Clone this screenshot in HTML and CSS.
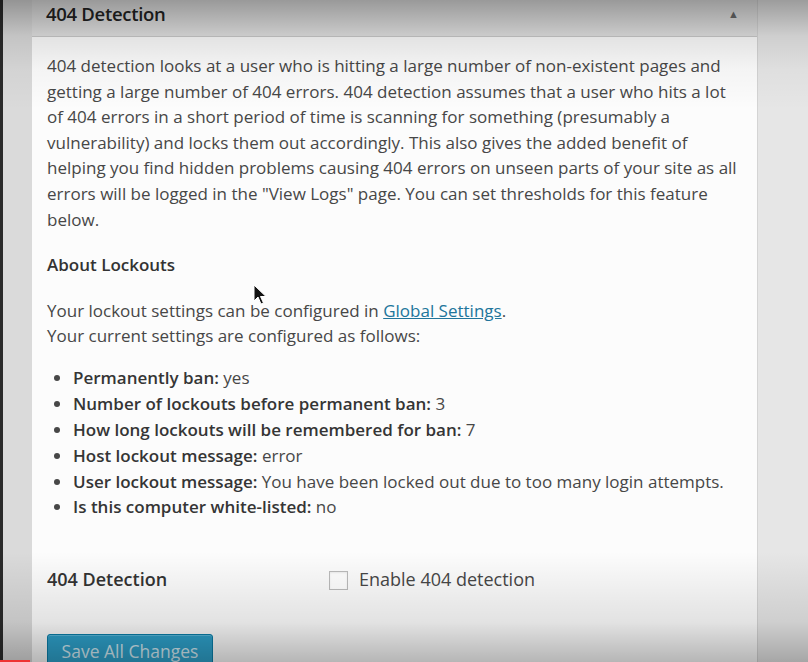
FILE: index.html
```html
<!DOCTYPE html>
<html lang="en">
  <head>
    <meta charset="UTF-8" />
    <title>404 Detection</title>
    <link rel="stylesheet" href="styles.css">
  </head>
  <body>
  <div class="screen">
    <div class="gutter"></div>
    <div class="panel">
      <div class="panel-head">
        <h3>404 Detection</h3>
        <span class="toggle">&#9650;</span>
      </div>
      <div class="panel-body">
        <p class="intro">404 detection looks at a user who is hitting a large number of non-existent pages and getting a large number of 404 errors. 404 detection assumes that a user who hits a lot of 404 errors in a short period of time is scanning for something (presumably a vulnerability) and locks them out accordingly. This also gives the added benefit of helping you find hidden problems causing 404 errors on unseen parts of your site as all errors will be logged in the "View Logs" page. You can set thresholds for this feature below.</p>
        <h4>About Lockouts</h4>
        <p class="lockout-info">Your lockout settings can be configured in <a href="#">Global Settings</a>.<br>Your current settings are configured as follows:</p>
        <ul class="settings">
          <li><b>Permanently ban:</b> yes</li>
          <li><b>Number of lockouts before permanent ban:</b> 3</li>
          <li><b>How long lockouts will be remembered for ban:</b> 7</li>
          <li><b>Host lockout message:</b> error</li>
          <li><b>User lockout message:</b> You have been locked out due to too many login attempts.</li>
          <li><b>Is this computer white-listed:</b> no</li>
        </ul>
        <div class="field-row">
          <div class="field-label">404 Detection</div>
          <label class="field-check"><span class="box"></span>Enable 404 detection</label>
        </div>
        <button class="save">Save All Changes</button>
      </div>
    </div>
    <div class="side"></div>
  </div>
  <svg class="cursor" width="14" height="22" viewBox="0 0 14 22">
    <path d="M1 1 L1 17 L5 13 L8 20 L10.5 19 L7.5 12.5 L13 12.5 Z" fill="#111" stroke="#fff" stroke-width="1"/>
  </svg>
  <div class="vignette"></div>
  <div class="progress"></div>
  </body>
</html>
```

FILE: styles.css
```css
body {
  margin: 0;
  width: 808px;
  height: 662px;
  overflow: hidden;
  font-family: "Open Sans", "Liberation Sans", sans-serif;
  color: #474747;
  background: #e4e4e4;
}
.screen {
  display: flex;
  height: 662px;
}
.gutter {
  width: 29px;
  border-left: 3px solid #2a2a2a;
  background: #dadada;
}
.panel {
  width: 725px;
  background: #fcfcfc;
  border-right: 1px solid #d4d4d4;
}
.side {
  flex: 1;
  background: #e6e6e6;
}
.panel-head {
  height: 36px;
  display: flex;
  align-items: center;
  justify-content: space-between;
  padding: 0 18px 0 14px;
  background: #e2e2e2;
  border-bottom: 1px solid #c9c9c9;
}
.panel-head h3 {
  margin: 0;
  font-size: 18.5px;
  font-weight: 600;
  color: #222;
  letter-spacing: -0.3px;
  margin-top: -10px;
}
.toggle {
  font-size: 11px;
  color: #6a6a6a;
  margin-top: -10px;
}
.panel-body {
  padding: 16px 15px 0 15px;
  font-size: 17px;
  line-height: 25.6px;
}
.intro {
  margin: 0;
  width: 690px;
}
h4 {
  margin: 20px 0 0 0;
  font-size: 17px;
  font-weight: 600;
  color: #333;
}
.lockout-info {
  margin: 20px 0 0 0;
}
.lockout-info a {
  color: #21759b;
}
.settings {
  margin: 16px 0 0 0;
  padding-left: 26px;
  line-height: 25.9px;
}
.settings b {
  font-weight: 600;
  color: #353535;
}
.field-row {
  display: flex;
  align-items: center;
  margin-top: 47px;
}
.field-label {
  width: 282px;
  font-weight: 600;
  color: #333;
  font-size: 18px;
}
.field-check {
  display: flex;
  align-items: center;
  gap: 11px;
  font-size: 18px;
}
.box {
  width: 17px;
  height: 17px;
  border: 1px solid #bbb;
  background: #fff;
  box-shadow: inset 0 1px 2px rgba(0, 0, 0, 0.08);
}
.save {
  margin-top: 41px;
  width: 166px;
  height: 34px;
  padding: 0;
  font-family: "Open Sans", "Liberation Sans", sans-serif;
  font-size: 17.5px;
  color: #d3ebf4;
  background: #2ea2cc;
  border: 1px solid #0a7ea8;
  border-radius: 3px;
  box-shadow: inset 0 1px 0 rgba(120, 200, 230, 0.6);
}
.cursor {
  position: absolute;
  left: 253px;
  top: 284px;
}
.vignette {
  position: absolute;
  left: 0;
  top: 0;
  width: 808px;
  height: 662px;
  pointer-events: none;
  background:
    linear-gradient(to bottom, rgba(0, 0, 0, 0.32) 0, rgba(0, 0, 0, 0.1) 36px, rgba(0, 0, 0, 0.03) 70px, rgba(0, 0, 0, 0) 110px),
    linear-gradient(to top, rgba(0, 0, 0, 0.28) 0, rgba(0, 0, 0, 0.1) 40px, rgba(0, 0, 0, 0) 110px);
}
.progress {
  position: absolute;
  left: 0;
  top: 660px;
  width: 30px;
  height: 2px;
  background: #e33;
}
```
